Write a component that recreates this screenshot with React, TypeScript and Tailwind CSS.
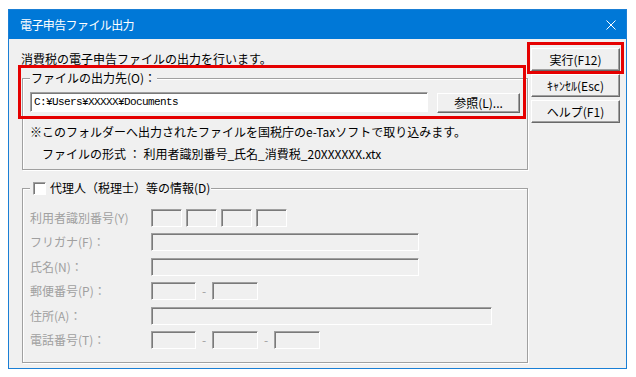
import React from 'react';

const jp = "font-['Noto_Sans_CJK_JP',sans-serif]";

// sunken edit box (classic windows look)
const sunken =
  'border border-t-[#a0a0a0] border-l-[#a0a0a0] border-b-white border-r-white shadow-[inset_1px_1px_0_#7a7a7a]';

const btn =
  'flex items-center justify-center bg-[#f0f0f0] border border-t-white border-l-white border-r-[#696969] border-b-[#696969] shadow-[inset_-1px_-1px_0_#a0a0a0] text-[12px] leading-none text-black';

const Box: React.FC<{ w: string }> = ({ w }) => <div className={`h-[18px] ${w} ${sunken}`} />;

const Dash = () => <div className="w-[16px] text-center text-[12px] leading-[18px] text-[#a0a0a0]">-</div>;

const Row: React.FC<{ label: string; children: React.ReactNode }> = ({ label, children }) => (
  <div className="flex items-center h-[18px]">
    <div className="w-[121px] text-[12px] leading-[16px] text-[#a0a0a0] whitespace-nowrap">{label}</div>
    <div className="flex items-center">{children}</div>
  </div>
);

const App: React.FC = () => {
  return (
    <div className={`relative w-[636px] h-[377px] bg-white pt-[9px] pl-[8px] ${jp}`}>
      <div className="w-[619px] h-[360px] border border-[#1a7fd5] bg-[#f0f0f0] flex flex-col">
        {/* title bar */}
        <div className="h-[29px] bg-[#0078d7] flex items-center justify-between pl-[11px] pr-[10px]">
          <span className="text-white text-[12px] leading-none tracking-[-0.6px]">電子申告ファイル出力</span>
          <svg width="10" height="10" viewBox="0 0 10 10">
            <path d="M0.5 0.5 L9.5 9.5 M9.5 0.5 L0.5 9.5" stroke="white" strokeWidth="1" />
          </svg>
        </div>

        <div className="flex flex-1">
          {/* left column */}
          <div className="w-[519px]">
            <div className="pl-[12px] mt-[12px] text-[12px] leading-[16px] text-black">
              消費税の電子申告ファイルの出力を行います。
            </div>

            <fieldset className="ml-[13px] mt-[3px] w-[506px] border border-[#a0a0a0] shadow-[inset_1px_1px_0_#fff,1px_1px_0_#fff] px-[7px] pb-[7px]">
              <legend className="px-[1px] bg-[#f0f0f0] text-[12px] leading-[16px] text-black">ファイルの出力先(O)：</legend>
              <div className="flex items-start mt-[6px]">
                <div className={`w-[398px] h-[20px] bg-white ${sunken} flex items-center pl-[3px]`}>
                  <span className="font-['Liberation_Mono',monospace] text-[11px] tracking-[-0.6px] text-black leading-none">
                    C:¥Users¥XXXXX¥Documents
                  </span>
                </div>
                <div className={`ml-[9px] mt-[1px] w-[83px] h-[20px] ${btn}`}>参照(L)...</div>
              </div>
              <div className="mt-[11px] text-[12px] leading-[16px] text-black whitespace-nowrap">
                ※このフォルダーへ出力されたファイルを国税庁のe-Taxソフトで取り込みます。
              </div>
              <div className="mt-[6px] pl-[12px] text-[12px] leading-[16px] text-black whitespace-nowrap">
                ファイルの形式 ： 利用者識別番号_氏名_消費税_20XXXXXX.xtx
              </div>
            </fieldset>

            <fieldset className="ml-[13px] mt-[10px] w-[506px] border border-[#a0a0a0] shadow-[inset_1px_1px_0_#fff,1px_1px_0_#fff] px-[7px] pt-[13px] pb-[13px]">
              <legend className="pl-[3px] pr-[1px] bg-[#f0f0f0] flex items-center gap-[4px] text-[12px] leading-[16px] text-black">
                <span className={`w-[13px] h-[13px] bg-white ${sunken}`} />
                代理人（税理士）等の情報(D)
              </legend>
              <div className="flex flex-col gap-[6.4px]">
                <Row label="利用者識別番号(Y)">
                  <div className="flex gap-[4px]">
                    <Box w="w-[31px]" />
                    <Box w="w-[31px]" />
                    <Box w="w-[31px]" />
                    <Box w="w-[31px]" />
                  </div>
                </Row>
                <Row label="フリガナ(F)：">
                  <Box w="w-[268px]" />
                </Row>
                <Row label="氏名(N)：">
                  <Box w="w-[268px]" />
                </Row>
                <Row label="郵便番号(P)：">
                  <Box w="w-[45px]" />
                  <Dash />
                  <Box w="w-[46px]" />
                </Row>
                <Row label="住所(A)：">
                  <Box w="w-[341px]" />
                </Row>
                <Row label="電話番号(T)：">
                  <Box w="w-[45px]" />
                  <Dash />
                  <Box w="w-[46px]" />
                  <Dash />
                  <Box w="w-[46px]" />
                </Row>
              </div>
            </fieldset>
          </div>

          {/* right column */}
          <div className="pl-[3px] pt-[9px] flex flex-col gap-[3px]">
            <div className={`w-[89px] h-[23px] ${btn}`}>実行(F12)</div>
            <div className={`w-[89px] h-[23px] ${btn}`}>ｷｬﾝｾﾙ(Esc)</div>
            <div className={`w-[89px] h-[23px] ${btn}`}>ヘルプ(F1)</div>
          </div>
        </div>
      </div>

      {/* red annotation frames */}
      <div className="absolute left-[18px] top-[65px] w-[508px] h-[54px] border-[3px] border-[#e50000] pointer-events-none" />
      <div className="absolute left-[527px] top-[42px] w-[97px] h-[32px] border-[3px] border-[#e50000] pointer-events-none" />
    </div>
  );
};

export default App;
